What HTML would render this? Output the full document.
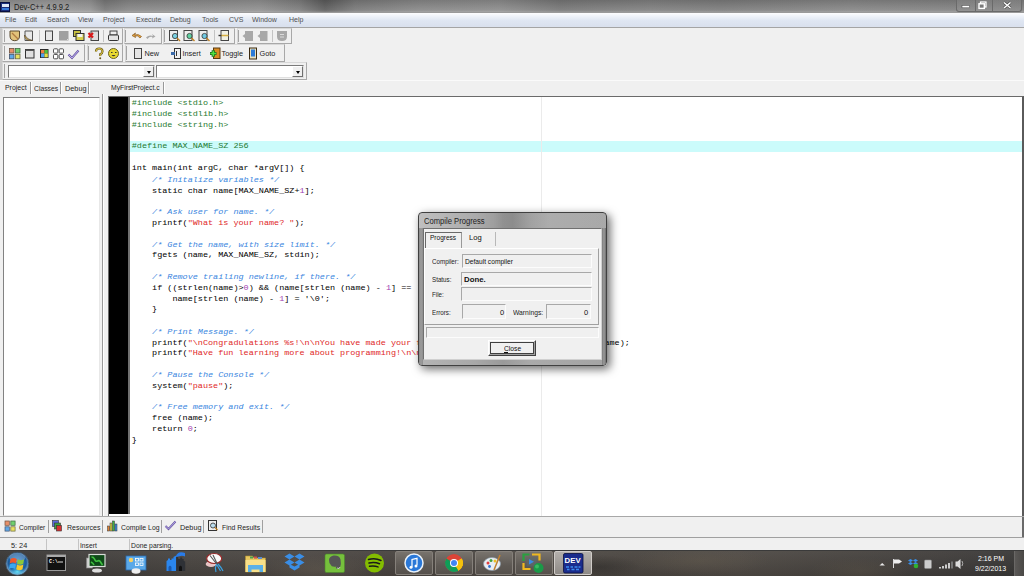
<!DOCTYPE html>
<html><head><meta charset="utf-8">
<style>
*{margin:0;padding:0;box-sizing:border-box}
html,body{width:1024px;height:576px;overflow:hidden;background:#f0f0f0;font-family:"Liberation Sans",sans-serif;position:relative}
.a{position:absolute}
#title{left:0;top:0;width:1024px;height:13px;background:linear-gradient(180deg,rgba(0,0,0,0.10),rgba(255,255,255,0.10) 85%,rgba(255,255,255,0.25)),linear-gradient(90deg,#8e8e8e 0,#989898 50px,#929292 90px,#767676 105px,#858585 130px,#8e8e8e 260px,#7a7a7a 300px,#5a5a5a 325px,#777 355px,#868686 420px,#8a8a8a 500px,#757575 560px,#7e7e7e 650px,#7a7a7a 720px,#848484 850px,#7e7e7e 1024px);border-bottom:1px solid #9a9a9a}
#title .t{left:14px;top:1.5px;font-size:8.6px;color:#1a1a1a;white-space:nowrap;transform:scaleX(0.875);transform-origin:0 0}
#menu{left:0;top:13px;width:1024px;height:15px;background:linear-gradient(#fdfdfe,#eef2f9 25%,#dfe6f2 55%,#dae1ee 90%);border-bottom:1px solid #a4a4a4}
#menu span{position:absolute;top:3px;font-size:7px;color:#505050}
.tb{background:#f0f0f0;border:1px solid #d8d8d8;border-right-color:#a8a8a8;border-bottom-color:#a8a8a8}
.grip{position:absolute;top:2px;width:2px;bottom:2px;border-left:1px solid #a0a0a0;border-right:1px solid #fff}
.sep{position:absolute;top:2px;width:2px;bottom:2px;border-left:1px solid #b0b0b0;border-right:1px solid #fff}
.ico{position:absolute}
.lbl{position:absolute;font-size:7.3px;color:#1e1e1e;white-space:nowrap}
.combo{background:#fff;border:1px solid #7a7a7a;border-right-color:#e0e0e0;border-bottom-color:#e0e0e0}
.dd{position:absolute;right:0;top:0;bottom:0;width:11px;background:#f0f0f0;border-left:1px solid #fff;border-top:1px solid #fff;border-right:1px solid #707070;border-bottom:1px solid #707070}
.dd:after{content:"";position:absolute;left:3px;top:4px;border-left:2.5px solid transparent;border-right:2.5px solid transparent;border-top:3px solid #000}
.tab{position:absolute;font-size:7.3px;color:#1e1e1e;white-space:nowrap}
.vs{position:absolute;width:2px;border-left:1px solid #999;border-right:1px solid #fff}
#code{left:130px;top:97px;width:892px;height:419px;background:#fff;overflow:hidden}
#code pre{position:absolute;left:1.75px;top:1.2px;font-family:"Liberation Mono",monospace;font-size:8.47px;line-height:12.078px;transform:scaleY(0.9);transform-origin:0 0;color:#000;font-weight:normal;white-space:pre}
.c{color:#3a86e0;font-style:italic;font-weight:normal}
.s{color:#e02828;font-weight:normal}
.p{color:#1f7a30}
.n{color:#a040b0}
#hl{left:0;top:44px;width:892px;height:11px;background:#cbfbfb}
#task{left:0;top:550px;width:1024px;height:26px;background:radial-gradient(ellipse 60px 14px at 320px 18px,rgba(110,100,85,0.35),transparent),radial-gradient(ellipse 70px 14px at 700px 10px,rgba(105,95,80,0.35),transparent),radial-gradient(ellipse 50px 14px at 860px 20px,rgba(100,90,75,0.3),transparent),radial-gradient(ellipse 40px 12px at 600px 16px,rgba(20,20,20,0.3),transparent),linear-gradient(180deg,rgba(255,255,255,0.06),rgba(0,0,0,0.05)),linear-gradient(90deg,#363432 0,#3f3c3a 8%,#46423e 18%,#4a4541 30%,#45403c 40%,#4d4843 50%,#48433e 62%,#4c4742 72%,#45413d 82%,#3e3b39 92%,#363534 100%);border-top:1px solid #3a3a3a}
.fld{border:1px solid #a8a8a8;border-right-color:#fcfcfc;border-bottom-color:#fcfcfc;background:#f0f0f0}
.dl{font-size:7.5px;color:#222;white-space:nowrap;transform:scaleX(0.83);transform-origin:0 0}
.btn{position:absolute;top:1px;width:38px;height:24px;border:1px solid #85807a;border-radius:2px;background:linear-gradient(#78736d,#5e5954 60%,#56514c)}
</style></head><body>

<!-- title bar -->
<div id="title" class="a">
  <div class="a" style="left:0;top:2px;width:10px;height:10px;background:#1c2e7a;border:1px solid #0a1040"><div class="a" style="left:1px;top:1px;width:7px;height:3px;background:#dfe6f5"></div><div class="a" style="left:1px;top:5px;width:7px;height:2px;background:#3a7ad8"></div></div>
  <div class="a t">Dev-C++ 4.9.9.2</div>
  <div class="a" style="left:956px;top:0;width:66px;height:12px;border:1px solid #6a6a6a;border-top:0;border-radius:0 0 3px 3px;background:linear-gradient(rgba(255,255,255,0.08),rgba(255,255,255,0.02))"></div>
  <div class="a" style="left:975px;top:0;width:1px;height:11px;background:#6a6a6a"></div>
  <div class="a" style="left:992px;top:0;width:1px;height:11px;background:#6a6a6a"></div>
  <svg class="a" style="left:956px;top:0" width="68" height="12" viewBox="956 0 68 12">
   <rect x="962" y="5.5" width="7.5" height="2.3" fill="#fff" stroke="#444" stroke-width="0.5"/>
   <rect x="980.5" y="2" width="5.5" height="5" fill="none" stroke="#fff" stroke-width="1.2"/>
   <rect x="979" y="3.8" width="5.3" height="4.6" fill="#7a7a7a" stroke="#fff" stroke-width="1.4"/>
   <path d="M1004 2.5 l6.5 5.5 M1010.5 2.5 l-6.5 5.5" stroke="#444" stroke-width="2.6"/>
   <path d="M1004 2.5 l6.5 5.5 M1010.5 2.5 l-6.5 5.5" stroke="#fff" stroke-width="1.5"/>
  </svg>
</div>

<!-- menu -->
<div id="menu" class="a">
  <span style="left:5px">File</span><span style="left:25px">Edit</span><span style="left:47px">Search</span><span style="left:78px">View</span><span style="left:103px">Project</span><span style="left:136px">Execute</span><span style="left:170px">Debug</span><span style="left:202px">Tools</span><span style="left:229px">CVS</span><span style="left:252px">Window</span><span style="left:289px">Help</span>
</div>

<!-- toolbars -->
<!-- toolbar frames -->
<div class="a" style="left:0;top:28px;width:2px;height:52px;background:#c8c8c8"></div>
<div class="a tb" style="left:2px;top:28px;width:121px;height:16px"></div>
<div class="a tb" style="left:124px;top:28px;width:38px;height:16px"></div>
<div class="a tb" style="left:163px;top:28px;width:72px;height:16px"></div>
<div class="a tb" style="left:237px;top:28px;width:55px;height:16px"></div>
<div class="a tb" style="left:2px;top:44px;width:83px;height:18px"></div>
<div class="a tb" style="left:87px;top:44px;width:36px;height:18px"></div>
<div class="a tb" style="left:125px;top:44px;width:160px;height:18px"></div>
<div class="a tb" style="left:2px;top:62px;width:305px;height:18px"></div>
<svg class="a" style="left:0;top:0" width="320" height="80" viewBox="0 0 320 80">
 <g stroke="#a4a4a4" stroke-width="1">
  <line x1="4.5" y1="30" x2="4.5" y2="42"/><line x1="125.5" y1="30" x2="125.5" y2="42"/><line x1="164.5" y1="30" x2="164.5" y2="42"/><line x1="238.5" y1="30" x2="238.5" y2="42"/>
  <line x1="4.5" y1="46" x2="4.5" y2="60"/><line x1="88.5" y1="46" x2="88.5" y2="60"/><line x1="126.5" y1="46" x2="126.5" y2="60"/>
  <line x1="4.5" y1="64" x2="4.5" y2="78"/>
 </g>
 <g stroke="#c4c4c4" stroke-width="1">
  <line x1="39.5" y1="30" x2="39.5" y2="42"/><line x1="103.5" y1="30" x2="103.5" y2="42"/><line x1="214.5" y1="30" x2="214.5" y2="42"/><line x1="272.5" y1="30" x2="272.5" y2="42"/>
 </g>
 <!-- row1 icons -->
 <path d="M10 31 h9.5 v5 q0 4.5 -4.75 4.7 q-4.75 -0.2 -4.75 -4.7z" fill="#e2c27a" stroke="#5a4a30" stroke-width="1"/>
 <path d="M12 33 l6 6" stroke="#b07a40" stroke-width="1.2"/>
 <path d="M25 31 h7.5 v9.5 h-7.5z" fill="#e8e8e8" stroke="#555" stroke-width="1"/>
 <path d="M24.5 35 q3 5 8 5.5 l-3 0 q-5 -1 -5 -5.5z" fill="#e4c060" stroke="#5a4a30" stroke-width="0.8"/>
 <rect x="45.5" y="31" width="7" height="9.5" fill="#e6e6e6" stroke="#444" stroke-width="1"/>
 <rect x="59" y="31" width="9.5" height="9.5" fill="#a0a0a0"/>
 <rect x="67" y="39" width="1" height="1" fill="#ddd"/>
 <rect x="73.5" y="30.5" width="7" height="6" fill="#c8c040" stroke="#333" stroke-width="1"/>
 <rect x="76" y="33.5" width="8" height="7" fill="#d8d050" stroke="#333" stroke-width="1"/>
 <rect x="77.5" y="34" width="5" height="3" fill="#f4f4f4"/>
 <rect x="91" y="31" width="7.5" height="9.5" fill="#ddd" stroke="#444" stroke-width="1"/>
 <path d="M88.5 33 l4.5 4.5 M93 33 l-4.5 4.5" stroke="#d81818" stroke-width="2.2"/>
 <rect x="110" y="31" width="7" height="4" fill="#eee" stroke="#444" stroke-width="1"/>
 <rect x="108.5" y="35" width="10" height="5.5" rx="1" fill="#e4e4e4" stroke="#333" stroke-width="1"/>
 <path d="M141.5 36.5 q-3 -3 -7 -1.5 l1 -2 l-3.5 2.5 l3.5 2 l-0.5 -1.5 q3 -1 5 2z" fill="#e4a440" stroke="#8a5a20" stroke-width="0.7"/>
 <path d="M146 37.5 q3 -3 7 -1.5 l-1 -2 l3.5 2.5 l-3.5 2 l0.5 -1.5 q-3 -1 -5 2z" fill="#a8a8a8"/>
 <g><rect x="169.5" y="30.5" width="8" height="10" fill="#eee" stroke="#444" stroke-width="1"/><circle cx="175" cy="36" r="2.6" fill="#7ad0e0" stroke="#333" stroke-width="0.8"/><path d="M177 38 l3 3" stroke="#c08020" stroke-width="1.4"/></g>
 <g><rect x="184" y="30.5" width="8" height="10" fill="#eee" stroke="#444" stroke-width="1"/><circle cx="189.5" cy="36" r="2.6" fill="#60d0a0" stroke="#333" stroke-width="0.8"/><path d="M191.5 38 l3 3" stroke="#c08020" stroke-width="1.4"/></g>
 <g><rect x="199" y="30.5" width="8" height="10" fill="#eee" stroke="#444" stroke-width="1"/><circle cx="204.5" cy="36" r="2.6" fill="#70c8e0" stroke="#333" stroke-width="0.8"/><path d="M206.5 38 l3 3" stroke="#c08020" stroke-width="1.4"/></g>
 <rect x="221" y="30.5" width="7.5" height="10" fill="#f0f0e0" stroke="#444" stroke-width="1"/>
 <path d="M221 35.5 h7.5" stroke="#d8b040" stroke-width="1.5"/><path d="M218.5 35.5 h3" stroke="#333" stroke-width="1.4"/>
 <path d="M245 31 h8 v10 h-8 v-3 l-2.5 -2 l2.5 -2z" fill="#a8a8a8"/>
 <path d="M260 31 h7.5 v10 h-7.5 v-3 l-2.5 -2 l2.5 -2z" fill="#a8a8a8"/>
 <path d="M277 31 h10 v5.5 q0 4.5 -5 4.5 q-5 0 -5 -4.5z" fill="#a8a8a8"/>
 <path d="M280 34.5 h4 M280 37 h4" stroke="#e8e8e8" stroke-width="0.8"/>
 <!-- row2 icons -->
 <rect x="9.5" y="48.5" width="4.5" height="4.5" fill="#e8906a" stroke="#6a5040" stroke-width="0.8"/>
 <rect x="15.5" y="48.5" width="4.5" height="4.5" fill="#70d070" stroke="#406a40" stroke-width="0.8"/>
 <rect x="9.5" y="54.3" width="4.5" height="4.5" fill="#60a8e8" stroke="#40506a" stroke-width="0.8"/>
 <rect x="15.5" y="54.3" width="4.5" height="4.5" fill="#e8e060" stroke="#6a6a40" stroke-width="0.8"/>
 <rect x="25.5" y="49.5" width="8.5" height="8.5" fill="#e0e0e0" stroke="#333" stroke-width="1"/>
 <rect x="25.5" y="49.5" width="8.5" height="1.5" fill="#555"/>
 <rect x="40" y="49" width="8.5" height="9" fill="#2a2a2a"/>
 <rect x="41" y="50" width="3.5" height="3.5" fill="#f08040"/><rect x="44.5" y="50" width="3.3" height="3.5" fill="#50c040"/><rect x="41" y="53.5" width="3.5" height="3.8" fill="#50a0f0"/><rect x="44.5" y="53.5" width="3.3" height="3.8" fill="#e8e040"/>
 <rect x="53.5" y="48.8" width="4.3" height="4.3" rx="0.8" fill="#fff" stroke="#444" stroke-width="0.9"/>
 <rect x="59.2" y="48.8" width="4.3" height="4.3" rx="0.8" fill="#fff" stroke="#444" stroke-width="0.9"/>
 <rect x="53.5" y="54.5" width="4.3" height="4.3" rx="0.8" fill="#fff" stroke="#444" stroke-width="0.9"/>
 <rect x="59.2" y="54.5" width="4.3" height="4.3" rx="0.8" fill="#fff" stroke="#444" stroke-width="0.9"/>
 <path d="M68.5 54.5 l3.5 3.5 l6.5 -7.5" fill="none" stroke="#6a5aa0" stroke-width="2.2"/>
 <path d="M68.5 54.5 l3.5 3.5 l6.5 -7.5" fill="none" stroke="#b8a8f0" stroke-width="1"/>
 <path d="M96 51.5 q0 -3 3.2 -3 q3.3 0 3.3 3 q0 1.8 -2.3 2.8 v1.8" fill="none" stroke="#6a5a20" stroke-width="2.2"/>
 <path d="M96 51.5 q0 -3 3.2 -3 q3.3 0 3.3 3 q0 1.8 -2.3 2.8 v1.8" fill="none" stroke="#e8d040" stroke-width="1"/>
 <circle cx="100.2" cy="58.2" r="1" fill="#6a5a20"/>
 <circle cx="113.5" cy="53.5" r="5" fill="#e8d830" stroke="#6a6020" stroke-width="1"/>
 <path d="M111 52.5 h1.5 M115 52.5 h1.5" stroke="#333" stroke-width="1"/><path d="M111.5 55 q2 2.5 4 0z" fill="#333"/>
 <rect x="134.5" y="48.5" width="7" height="10" fill="#e4e4e4" stroke="#444" stroke-width="1"/>
 <rect x="174.5" y="48.5" width="6" height="10" fill="#f0f0f0" stroke="#333" stroke-width="1"/>
 <path d="M176.5 51 v5" stroke="#333" stroke-width="1"/>
 <path d="M171 53.5 h4" stroke="#3a6aa8" stroke-width="3"/>
 <rect x="213.5" y="48" width="6.5" height="10.5" fill="#d88a20" stroke="#5a3a10" stroke-width="1"/>
 <path d="M210 53.5 h6.5 M213.25 50.25 v6.5" stroke="#1a6a1a" stroke-width="3.2"/>
 <path d="M210.5 53.5 h5.5 M213.25 50.75 v5.5" stroke="#50e040" stroke-width="1.6"/>
 <rect x="249.5" y="48" width="7" height="11" fill="#e8e0c0" stroke="#3a2a10" stroke-width="1"/>
 <rect x="251" y="49.5" width="4" height="7" fill="#2a7ad8"/>
</svg>
<div class="lbl" style="left:144.5px;top:48.8px">New</div>
<div class="lbl" style="left:182.5px;top:48.8px">Insert</div>
<div class="lbl" style="left:221.5px;top:48.8px">Toggle</div>
<div class="lbl" style="left:259.5px;top:48.8px">Goto</div>
<div class="a combo" style="left:8px;top:65px;width:147px;height:13px"><div class="dd"></div></div>
<div class="a combo" style="left:156px;top:65px;width:148px;height:13px"><div class="dd"></div></div>


<!-- tabs row -->
<div class="tab" style="left:5px;top:83px;transform:scaleX(0.95);transform-origin:0 0">Project</div>
<div class="vs" style="left:30px;top:82px;height:12px"></div>
<div class="tab" style="left:33.5px;top:84px;transform:scaleX(0.93);transform-origin:0 0">Classes</div>
<div class="vs" style="left:60px;top:82px;height:12px"></div>
<div class="tab" style="left:65px;top:84px">Debug</div>
<div class="vs" style="left:88px;top:82px;height:12px"></div>
<div class="tab" style="left:111px;top:83px;transform:scaleX(0.93);transform-origin:0 0">MyFirstProject.c</div>
<div class="vs" style="left:163px;top:82px;height:12px"></div>

<!-- left panel -->
<div class="a" style="left:3px;top:97px;width:97px;height:419px;background:#fff;border:1px solid #828282;border-right-color:#e8e8e8;border-bottom-color:#e8e8e8"></div>
<div class="vs" style="left:102px;top:94px;height:423px"></div>

<!-- editor -->
<div class="a" style="left:108px;top:96px;width:916px;height:421px;background:#fff;border:1px solid #6a6a6a;border-right:2px solid #5a5a5a;border-bottom-color:#e0e0e0"></div>
<div class="a" style="left:0;top:80px;width:1024px;height:1px;background:#fafafa"></div>
<div class="a" style="left:109px;top:97px;width:19px;height:417px;background:#000"></div>
<div class="a" style="left:128px;top:97px;width:2px;height:417px;background:#707070"></div>
<div id="code" class="a">
<div id="hl" class="a"></div>
<div class="a" style="left:411px;top:0;width:1px;height:419px;background:#ebebeb"></div>
<pre><span class="p">#include &lt;stdio.h&gt;</span>
<span class="p">#include &lt;stdlib.h&gt;</span>
<span class="p">#include &lt;string.h&gt;</span>

<span class="p">#define MAX_NAME_SZ 256</span>

int main(int argC, char *argV[]) {
    <span class="c">/* Initalize variables */</span>
    static char name[MAX_NAME_SZ+<span class="n">1</span>];

    <span class="c">/* Ask user for name. */</span>
    printf(<span class="s">"What is your name? "</span>);

    <span class="c">/* Get the name, with size limit. */</span>
    fgets (name, MAX_NAME_SZ, stdin);

    <span class="c">/* Remove trailing newline, if there. */</span>
    if ((strlen(name)&gt;<span class="n">0</span>) &amp;&amp; (name[strlen (name) - <span class="n">1</span>] == '\n'))
        name[strlen (name) - <span class="n">1</span>] = '\0';
    }

    <span class="c">/* Print Message. */</span>
    printf(<span class="s">"\nCongradulations %s!\n\nYou have made your first program in the C language\n"</span>, name);
    printf(<span class="s">"Have fun learning more about programming!\n\n"</span>);

    <span class="c">/* Pause the Console */</span>
    system(<span class="s">"pause"</span>);

    <span class="c">/* Free memory and exit. */</span>
    free (name);
    return <span class="n">0</span>;
}</pre>
</div>

<!-- bottom tabs -->
<div class="a" style="left:1022px;top:517px;width:2px;height:21px;background:#6a6a6a"></div>
<div class="a" style="left:0;top:516px;width:1024px;height:1px;background:#a8a8a8"></div>
<svg class="a" style="left:0;top:516px" width="280" height="22" viewBox="0 516 280 22">
 <rect x="5" y="521" width="4.3" height="4.3" fill="#e8906a" stroke="#6a5040" stroke-width="0.7"/>
 <rect x="10.8" y="521" width="4.3" height="4.3" fill="#70d070" stroke="#406a40" stroke-width="0.7"/>
 <rect x="5" y="526.8" width="4.3" height="4.3" fill="#60a8e8" stroke="#40506a" stroke-width="0.7"/>
 <rect x="10.8" y="526.8" width="4.3" height="4.3" fill="#e8e060" stroke="#6a6a40" stroke-width="0.7"/>
 <rect x="52.5" y="520.5" width="6" height="6" fill="#5a6ad8" stroke="#333" stroke-width="0.6"/>
 <rect x="54.5" y="523" width="6" height="6" fill="#40a040" stroke="#333" stroke-width="0.6"/>
 <rect x="56.5" y="525.5" width="5" height="5.5" fill="#d83030" stroke="#333" stroke-width="0.6"/>
 <rect x="107.5" y="526" width="2" height="5" fill="#e08030" stroke="#333" stroke-width="0.5"/>
 <rect x="110" y="523" width="2" height="8" fill="#e0d040" stroke="#333" stroke-width="0.5"/>
 <rect x="112.5" y="521" width="2" height="10" fill="#40b040" stroke="#333" stroke-width="0.5"/>
 <rect x="115" y="524" width="2" height="7" fill="#4090e0" stroke="#333" stroke-width="0.5"/>
 <path d="M165.5 526 l3 3 l7 -7.5" fill="none" stroke="#6a5aa0" stroke-width="2"/>
 <path d="M165.5 526 l3 3 l7 -7.5" fill="none" stroke="#b8a8f0" stroke-width="0.9"/>
 <rect x="208.5" y="520.5" width="8" height="10" fill="#eee" stroke="#333" stroke-width="1"/>
 <circle cx="213" cy="525.5" r="2.5" fill="#bde" stroke="#333" stroke-width="0.8"/>
 <path d="M215 527.5 l2.5 2.5" stroke="#c08020" stroke-width="1.3"/>
 <g stroke="#a0a0a0" stroke-width="1"><line x1="48.5" y1="520" x2="48.5" y2="533"/><line x1="102.5" y1="520" x2="102.5" y2="533"/><line x1="161.5" y1="520" x2="161.5" y2="533"/><line x1="203.5" y1="520" x2="203.5" y2="533"/><line x1="262.5" y1="520" x2="262.5" y2="533"/></g>
</svg>
<div class="lbl" style="left:19px;top:523px;transform:scaleX(0.9);transform-origin:0 0">Compiler</div>
<div class="lbl" style="left:66.5px;top:523px;transform:scaleX(0.96);transform-origin:0 0">Resources</div>
<div class="lbl" style="left:121px;top:523px;transform:scaleX(0.94);transform-origin:0 0">Compile Log</div>
<div class="lbl" style="left:180px;top:523px">Debug</div>
<div class="lbl" style="left:222px;top:523px;transform:scaleX(0.94);transform-origin:0 0">Find Results</div>


<!-- status bar -->
<div class="a" style="left:0;top:537px;width:1024px;height:1px;background:#a0a0a0"></div>
<div class="a" style="left:0;top:538px;width:1024px;height:12px;background:#f0f0f0"></div>
<div class="lbl" style="left:11px;top:540.5px">5: 24</div>
<div class="a" style="left:45.5px;top:539px;width:1px;height:11px;background:#c4c4c4"></div>
<div class="a" style="left:77.5px;top:539px;width:1px;height:11px;background:#c4c4c4"></div>
<div class="lbl" style="left:79.5px;top:540.5px;transform:scaleX(0.92);transform-origin:0 0">Insert</div>
<div class="a" style="left:128.5px;top:539px;width:1px;height:11px;background:#c4c4c4"></div>
<div class="lbl" style="left:130.5px;top:540.5px;transform:scaleX(0.93);transform-origin:0 0">Done parsing.</div>

<!-- taskbar -->
<div id="task" class="a"></div>
<div class="btn" style="left:395px;top:551px"></div>
<div class="btn" style="left:435px;top:551px"></div>
<div class="btn" style="left:475px;top:551px"></div>
<div class="btn" style="left:515px;top:551px"></div>
<div class="btn" style="left:554px;top:551px;background:linear-gradient(#b4b0ac,#8e8a86);border-color:#d0ccc8"></div>
<div class="a" style="left:1014px;top:551px;width:10px;height:25px;background:linear-gradient(90deg,#5a5856,#4a4846);border-left:1px solid #6a6866"></div>
<svg class="a" style="left:0;top:548px" width="1024" height="28" viewBox="0 548 1024 28">
 <defs>
  <radialGradient id="orb" cx="0.5" cy="0.45" r="0.55"><stop offset="0" stop-color="#3a8ad0"/><stop offset="0.7" stop-color="#1a5a9a"/><stop offset="1" stop-color="#a0c0d8"/></radialGradient><radialGradient id="orbglow" cx="0.5" cy="0.7" r="0.6"><stop offset="0" stop-color="#70f0ff" stop-opacity="0.9"/><stop offset="1" stop-color="#30a0e0" stop-opacity="0"/></radialGradient>
 </defs>
 <circle cx="17.3" cy="563.7" r="11.5" fill="url(#orb)" stroke="#3a4a5a" stroke-width="0.8"/>
 <ellipse cx="17.3" cy="570" rx="8" ry="4.5" fill="url(#orbglow)"/>
 <ellipse cx="17.3" cy="557.5" rx="8" ry="4.5" fill="rgba(255,255,255,0.25)"/>
 <path d="M10.5 559 q3 -2 6.3 0 l-0.8 4.6 q-3 -2 -6.3 0z" fill="#f0582a"/>
 <path d="M17.8 559.2 q3 2 6.3 0 l-0.8 4.6 q-3 2 -6.3 0z" fill="#8ac83a"/>
 <path d="M9.7 564.4 q3 -2 6.3 0 l-0.8 4.6 q-3 -2 -6.3 0z" fill="#3aa8f0"/>
 <path d="M17 564.6 q3 2 6.3 0 l-0.8 4.6 q-3 2 -6.3 0z" fill="#f8c828"/>
 <!-- cmd -->
 <rect x="47" y="555" width="18.5" height="15.5" fill="#111" stroke="#9a9a9a" stroke-width="1"/>
 <rect x="47" y="555" width="18.5" height="2" fill="#aaa"/>
 <text x="49" y="562.5" font-family="Liberation Mono" font-size="5" fill="#fff" font-weight="bold">C:\</text>
 <rect x="58" y="561.5" width="5" height="1" fill="#ddd"/>
 <!-- green monitor -->
 <rect x="86.5" y="558" width="6" height="10" fill="#ccc" stroke="#888" stroke-width="0.6"/>
 <rect x="89" y="554.5" width="16" height="12" fill="#0e4a18" stroke="#d8dcd8" stroke-width="1.2"/>
 <path d="M91.5 557 q2 0 3 2 q1 3 3 2 q2 -1 3 1 l2 3 M91 562 q2 1 3 3" stroke="#40c040" stroke-width="1.6" fill="none"/>
 <ellipse cx="97" cy="570.5" rx="5" ry="2" fill="#ddd"/>
 <!-- control panel -->
 <rect x="126" y="556" width="20" height="14" fill="#5aa8e8" stroke="#2a6ab0" stroke-width="0.8"/>
 <circle cx="131" cy="560" r="2.2" fill="#f8d060"/>
 <rect x="135.5" y="558.5" width="3" height="2.5" fill="none" stroke="#fff" stroke-width="0.8"/><rect x="140" y="558.5" width="3" height="2.5" fill="none" stroke="#fff" stroke-width="0.8"/>
 <rect x="135.5" y="563" width="3" height="2.5" fill="none" stroke="#fff" stroke-width="0.8"/><rect x="140" y="563" width="3" height="2.5" fill="none" stroke="#fff" stroke-width="0.8"/>
 <ellipse cx="136" cy="571" rx="4.5" ry="2.8" fill="#eee"/>
 <!-- castle -->
 <path d="M166.5 571 v-10 l1.5 -1 v-1.5 h2 v1.5 h1.5 v-1.5 h2 v-1.5 l2.7 -1.5 v15.5z" fill="#2a86ee"/>
 <path d="M168.5 571 v-4 q1.5 -2.5 3 0 v4z" fill="#1a5ab0"/>
 <path d="M176.2 556.5 l2 1 v1.5 h2 v-1.5 h2 v1.5 h1.5 v2 l1.5 0.5 v9.5 h-9z" fill="#2e3136"/>
 <path d="M179 571 v-4 q1.5 -2.5 3 0 v4z" fill="#111"/>
 <path d="M175.5 557 q1 -3.5 3.5 -4.5 q3 -0.8 6 0.5 v3.5 q-3 -1.2 -5.5 -0.2 q-2.5 0.6 -4 0.7z" fill="#2a7ce8"/>
 <!-- snipping -->
 <ellipse cx="211" cy="564" rx="5.3" ry="3" fill="#e8c4c4"/>
 <ellipse cx="214.2" cy="558.5" rx="7.5" ry="5" fill="#fafafa" stroke="#9a2a2a" stroke-width="1.2"/>
 <path d="M210 555.5 l7 9 M213 555 l4.5 9.5" stroke="#555" stroke-width="1.1"/>
 <path d="M216.5 564 q-2 4 -0.5 8 M218 564 q3 3 5 7 M217 565 l3.5 6" stroke="#3aa0e0" stroke-width="1.2" fill="none"/>
 <!-- folder -->
 <path d="M245.5 556 h7 l1.5 2 h11.5 v14 h-20z" fill="#e8c860" stroke="#b09030" stroke-width="0.6"/>
 <rect x="245.5" y="560" width="20" height="12" fill="#f8e08a"/>
 <path d="M248 565 h15 v7 h-3.5 v-2.5 h-8 v2.5 h-3.5z" fill="#5ab0e8"/><rect x="250" y="556.5" width="3" height="2" fill="#50a050"/><rect x="254" y="556.5" width="3" height="2" fill="#d05050"/><rect x="258" y="557" width="4" height="2" fill="#5a8ad0"/>
 <!-- dropbox -->
 <path d="M289.5 553.5 l5 3 l-5 3 l-5 -3z M299.5 553.5 l5 3 l-5 3 l-5 -3z M289.5 559.5 l5 3 l-5 3 l-5 -3z M299.5 559.5 l5 3 l-5 3 l-5 -3z M294.5 566.5 l5 -2.5 v3.5 l-5 3 l-5 -3 v-3.5z" fill="#3a8ee6"/>
 <!-- evernote -->
 <rect x="325" y="554" width="19.5" height="18.5" rx="1.5" fill="#76c03c" stroke="#4a8a2a" stroke-width="0.6"/>
 <path d="M329 560 q0 -3.5 4.5 -4.5 q6 -0.5 7 4 q1 5 -0.5 8 q-1.5 2 -3.5 1 q-1.5 -1 0 -2 q-5 1 -6 -2 q-1.5 -1.5 -1.5 -4.5z" fill="#555"/>
 <path d="M337 568 q2.5 1.5 3 -1" stroke="#ddd" stroke-width="0.8" fill="none"/>
 <!-- spotify -->
 <circle cx="374.5" cy="563" r="9.5" fill="#84bd00"/>
 <path d="M368.5 559.5 q6.5 -2 12.5 1 M369 563 q5.5 -1.5 10.5 0.8 M369.5 566.3 q4.5 -1 8.5 0.6" stroke="#1a1a1a" stroke-width="1.5" fill="none" stroke-linecap="round"/>
 <!-- itunes -->
 <circle cx="414" cy="563" r="9" fill="#2a78d8" stroke="#e8f0f8" stroke-width="1.5"/>
 <path d="M412 567 v-7.5 l5 -1.2 v7" stroke="#fff" stroke-width="1.2" fill="none"/>
 <circle cx="411" cy="567.2" r="1.5" fill="#fff"/><circle cx="416" cy="566" r="1.5" fill="#fff"/>
 <!-- chrome -->
 <circle cx="454" cy="563" r="9" fill="#db4437"/>
 <path d="M454 563 l-7.8 -4.5 A9 9 0 0 0 449.5 570.8z" fill="#0f9d58"/>
 <path d="M454 563 l4.5 7.8 A9 9 0 0 0 461.8 558.5z" fill="#f4c20d"/>
 <path d="M454 563 l-4.5 7.8 A9 9 0 0 0 458.5 570.8z" fill="#0f9d58"/>
 <path d="M454 563 L461.8 558.5 A9 9 0 0 1 458.5 570.8z" fill="#f4c20d"/>
 <circle cx="454" cy="563" r="4" fill="#fff"/><circle cx="454" cy="563" r="3" fill="#4285f4"/>
 <!-- paint -->
 <ellipse cx="492" cy="564" rx="8.5" ry="6.5" fill="#e8eef4" stroke="#8898a8" stroke-width="0.6"/>
 <circle cx="488" cy="563" r="1.5" fill="#e04040"/><circle cx="491" cy="560.5" r="1.5" fill="#40a040"/><circle cx="495" cy="561" r="1.5" fill="#f0c020"/><circle cx="489.5" cy="566.5" r="1.4" fill="#3070d0"/>
 <path d="M494 570 l6 -15" stroke="#c08030" stroke-width="1.5"/>
 <!-- green app -->
 <path d="M523.5 561 v-6.5 h6" stroke="#2aa040" stroke-width="2.2" fill="none"/>
 <path d="M532 554.5 h7.5 v6" stroke="#f0b820" stroke-width="2.2" fill="none"/>
 <path d="M523.5 563 v6 h7" stroke="#f0b820" stroke-width="2.2" fill="none"/>
 <rect x="526.5" y="557.5" width="10" height="9" fill="#5a6a70" opacity="0.6"/>
 <path d="M529 559 l5 2.7 l-5 2.7z" fill="#3a8ae0"/>
 <circle cx="538.5" cy="568" r="5" fill="#1a9a48"/>
 <circle cx="537" cy="566.5" r="2" fill="#50d070" opacity="0.6"/>
 <!-- dev -->
 <rect x="563.5" y="553.5" width="19.5" height="19.5" rx="1.5" fill="#1a2c8c" stroke="#0a1040" stroke-width="0.8"/>
 <text x="564.6" y="562.8" font-family="Liberation Sans" font-size="8" font-weight="bold" fill="#fff" textLength="16" lengthAdjust="spacingAndGlyphs">DEV</text>
 <path d="M566 567 h3 M570.5 567 h2.5 M574.5 567 h3 M578.5 567 h2 M567 569.5 h2.5 M571.5 569.5 h3 M576 569.5 h3" stroke="#3a8af0" stroke-width="1.6"/>
 <!-- tray -->
 <path d="M879.5 565.5 l2.7 -2.5 l2.7 2.5z" fill="#e8e8e8"/>
 <path d="M893.5 559 v9" stroke="#ddd" stroke-width="1"/><path d="M894 559.5 h5 l3 2 l-3 2 h-5z" fill="#eee"/>
 <path d="M910.5 559 l2.5 1.5 l-2.5 1.5 l-2.5 -1.5z M915.5 559 l2.5 1.5 l-2.5 1.5 l-2.5 -1.5z M910.5 562 l2.5 1.5 l-2.5 1.5 l-2.5 -1.5z M915.5 562 l2.5 1.5 l-2.5 1.5 l-2.5 -1.5z" fill="#3a8ee6"/>
 <circle cx="916" cy="566" r="2.3" fill="#30b030"/>
 <rect x="924.5" y="560" width="7" height="8.5" rx="1" fill="#ccc" stroke="#888" stroke-width="0.5"/>
 <path d="M939 567 h2 v1.5 h-2z M942 566 h2 v2.5 h-2z M945 564.5 h2 v4 h-2z M948 563 h2 v5.5 h-2z" fill="#ccc"/><path d="M951 561.5 h2 v7 h-2z" fill="#777"/>
 <path d="M955.5 561.5 h2 l3 -2.5 v10 l-3 -2.5 h-2z" fill="#ddd"/><path d="M962 561 q1.5 2.5 0 5" stroke="#ccc" stroke-width="0.8" fill="none"/>
</svg>
<div class="a" style="left:978px;top:553.5px;font-size:7.5px;color:#fff;white-space:nowrap;transform:scaleX(0.93);transform-origin:0 0">2:16 PM</div>
<div class="a" style="left:975px;top:564px;font-size:7.5px;color:#fff;white-space:nowrap;transform:scaleX(0.93);transform-origin:0 0">9/22/2013</div>


<!-- dialog -->
<div class="a" style="left:418px;top:212px;width:189px;height:154px;border-radius:4px;box-shadow:3px 3px 10px rgba(0,0,0,0.6);border:1px solid #404040;background:linear-gradient(90deg,#b4b4b4 0%,#a8a8a8 30%,#9a9a9a 45%,#aaa 60%,#a4a4a4 100%)"></div>
<div class="a" style="left:419px;top:213px;width:187px;height:15px;border-radius:3px 3px 0 0;background:linear-gradient(90deg,rgba(255,255,255,0.15),rgba(255,255,255,0) 40%,rgba(0,0,0,0.12) 50%,rgba(255,255,255,0.05) 70%)"></div>
<div class="a" style="left:424px;top:215.5px;font-size:8.4px;color:#1e1e1e;white-space:nowrap;transform:scaleX(0.91);transform-origin:0 0">Compile Progress</div>
<div class="a" style="left:419px;top:228px;width:187px;height:137px;border-radius:0 0 3px 3px;background:linear-gradient(90deg,#8a8a8a,#9c9c9c 2px,#8e8e8e 4px,transparent 4px,transparent 183px,#7c7c7c 183px,#9a9a9a 185px,#6e6e6e 187px)"></div>
<div class="a" style="left:423px;top:228px;width:179px;height:132px;background:#f0f0f0;border:1px solid #707070;border-right-color:#d0d0d0;border-bottom-color:#d0d0d0"></div>
<!-- tab body -->
<div class="a" style="left:424px;top:248px;width:175px;height:77px;border:1px solid #fff;border-right-color:#a0a0a0;border-bottom-color:#a0a0a0"></div>
<div class="a" style="left:425px;top:232px;width:37px;height:16px;background:#f0f0f0;border-top:1px solid #6a6a6a;border-left:1px solid #6a6a6a;border-right:1px solid #9a9a9a"></div>

<div class="a" style="left:495px;top:232px;width:1px;height:14px;background:#b8b8b8"></div>
<div class="a" style="left:430px;top:233.2px;font-size:7.6px;color:#111;white-space:nowrap;transform:scaleX(0.86);transform-origin:0 0">Progress</div>
<div class="a" style="left:469px;top:233.2px;font-size:7.6px;color:#111;white-space:nowrap">Log</div>
<div class="a dl" style="left:432px;top:257.3px">Compiler:</div>
<div class="a dl" style="left:432px;top:275.3px">Status:</div>
<div class="a dl" style="left:432px;top:290.3px">File:</div>
<div class="a dl" style="left:432px;top:308.3px">Errors:</div>
<div class="a dl" style="left:513px;top:308.3px;transform:scaleX(0.9)">Warnings:</div>
<div class="a fld" style="left:462px;top:254px;width:130px;height:14px"></div>
<div class="a fld" style="left:461px;top:272px;width:131px;height:14px"></div>
<div class="a fld" style="left:461px;top:287px;width:131px;height:14px"></div>
<div class="a fld" style="left:462px;top:304px;width:44px;height:15px"></div>
<div class="a fld" style="left:546px;top:304px;width:45px;height:15px"></div>
<div class="a dl" style="left:465px;top:257.3px;color:#111;transform:scaleX(0.885)">Default compiler</div>
<div class="a" style="left:464px;top:275.2px;font-size:7.8px;color:#111;font-weight:bold;white-space:nowrap">Done.</div>
<div class="a" style="left:500px;top:308px;font-size:7.5px;color:#111">0</div>
<div class="a" style="left:584px;top:308px;font-size:7.5px;color:#111">0</div>
<div class="a fld" style="left:426px;top:327px;width:173px;height:11px"></div>
<div class="a" style="left:488px;top:340px;width:48px;height:16px;background:#f0f0f0;border:1px solid #fff;border-right-color:#404040;border-bottom-color:#404040;box-shadow:inset -1px -1px 0 #a0a0a0"></div>
<div class="a" style="left:490px;top:342px;width:44px;height:12px;border:1px solid #404040"></div>
<div class="a" style="left:504px;top:344px;font-size:7.3px;color:#111;white-space:nowrap;transform:scaleX(0.92);transform-origin:0 0">Close</div>
<div class="a" style="left:504px;top:351.5px;width:4px;height:1px;background:#111"></div>


</body></html>
